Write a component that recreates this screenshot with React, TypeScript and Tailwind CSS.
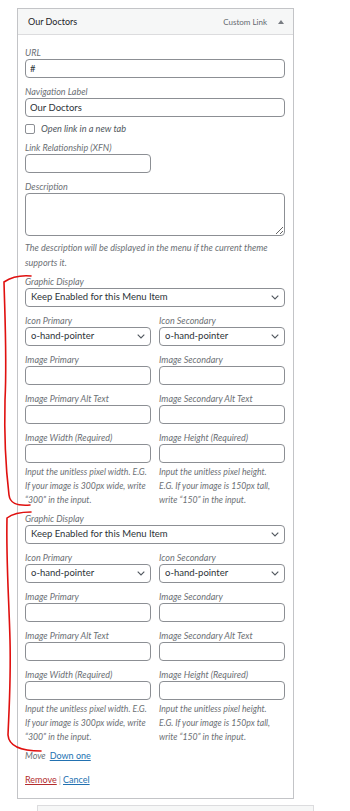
import type { ReactNode } from "react";

const font = { fontFamily: 'Lato, "Open Sans", sans-serif' };

function Label({ children }: { children: ReactNode }) {
  return (
    <div className="h-[13px] whitespace-nowrap text-[9px] italic leading-[13px] text-[#6c7075]">
      {children}
    </div>
  );
}

function TextInput({ value = "", className = "w-full" }: { value?: string; className?: string }) {
  return (
    <input
      readOnly
      value={value}
      className={`block h-[19px] rounded-[4px] border border-[#8c8f94] bg-white px-[4px] text-[9.5px] text-[#2c3338] outline-none ${className}`}
    />
  );
}

function Select({ value }: { value: string }) {
  return (
    <div className="flex h-[19px] w-full items-center justify-between rounded-[4px] border border-[#8c8f94] bg-white pl-[5px] pr-[5px] text-[9.5px] text-[#2c3338]">
      <span className="whitespace-nowrap">{value}</span>
      <svg width="8" height="5" viewBox="0 0 8 5" fill="none">
        <path d="M0.7 0.7 L4 4 L7.3 0.7" stroke="#50575e" strokeWidth="1.1" />
      </svg>
    </div>
  );
}

function Pair({ left, right }: { left: [string, ReactNode]; right: [string, ReactNode] }) {
  return (
    <div className="mt-[7px] grid grid-cols-2 gap-x-[8px]">
      <div>
        <Label>{left[0]}</Label>
        {left[1]}
      </div>
      <div>
        <Label>{right[0]}</Label>
        {right[1]}
      </div>
    </div>
  );
}

function GraphicGroup() {
  return (
    <div className="mt-[5px]">
      <Label>Graphic Display</Label>
      <Select value="Keep Enabled for this Menu Item" />
      <Pair
        left={["Icon Primary", <Select value="o-hand-pointer" />]}
        right={["Icon Secondary", <Select value="o-hand-pointer" />]}
      />
      <Pair left={["Image Primary", <TextInput />]} right={["Image Secondary", <TextInput />]} />
      <Pair
        left={["Image Primary Alt Text", <TextInput />]}
        right={["Image Secondary Alt Text", <TextInput />]}
      />
      <Pair
        left={["Image Width (Required)", <TextInput />]}
        right={["Image Height (Required)", <TextInput />]}
      />
      <div className="mt-[2px] grid grid-cols-2 gap-x-[8px] text-[8.7px] italic leading-[14px] text-[#6c7075]">
        <p>Input the unitless pixel width. E.G. If your image is 300px wide, write “300” in the input.</p>
        <p className="pr-[8px]">
          Input the unitless pixel height. E.G. If your image is 150px tall, write “150” in the input.
        </p>
      </div>
    </div>
  );
}

export default function App() {
  return (
    <div className="relative h-[811px] w-[350px] overflow-hidden bg-white" style={font}>
      <div className="ml-[17px] mt-[8px] w-[277px] border border-[#c3c4c7] bg-white">
        <div className="flex h-[26px] items-center justify-between border-b border-[#dcdcde] bg-[#f6f7f7] pl-[10px] pr-[9px]">
          <span className="text-[9px] text-[#1d2327]">Our Doctors</span>
          <div className="flex items-center gap-[11px]">
            <span className="text-[8px] text-[#646970]">Custom Link</span>
            <svg width="6" height="4" viewBox="0 0 6 4">
              <path d="M0 4 L3 0 L6 4 Z" fill="#787c82" />
            </svg>
          </div>
        </div>

        <div className="pb-[11px] pl-[7px] pr-[8px] pt-[11px]">
          <Label>URL</Label>
          <TextInput value="#" />

          <div className="mt-[7px]">
            <Label>Navigation Label</Label>
            <TextInput value="Our Doctors" />
          </div>

          <div className="mt-[7px] flex h-[10px] items-center gap-[6px]">
            <span className="block h-[10px] w-[10px] rounded-[2px] border border-[#8c8f94] bg-white" />
            <span className="text-[9.2px] italic text-[#50575e]">Open link in a new tab</span>
          </div>

          <div className="mt-[7px]">
            <Label>Link Relationship (XFN)</Label>
            <TextInput className="w-[126px]" />
          </div>

          <div className="mt-[7px]">
            <Label>Description</Label>
            <textarea
              readOnly
              className="block h-[43px] w-full rounded-[4px] border border-[#8c8f94] bg-white outline-none"
            />
            <p className="mt-[4px] text-[9px] italic leading-[15px] text-[#6c7075]">
              The description will be displayed in the menu if the current theme supports it.
            </p>
          </div>

          <GraphicGroup />
          <GraphicGroup />

          <div className="mt-[5px] flex items-center gap-[4px] text-[9px] leading-[14px]">
            <span className="italic text-[#6c7075]">Move</span>
            <a className="text-[#2271b1] underline">Down one</a>
          </div>

          <div className="mt-[10px] text-[9px] leading-[14px]">
            <a className="text-[#b32d2e] underline">Remove</a>
            <span className="mx-[2px] text-[#a7aaad]">|</span>
            <a className="text-[#2271b1] underline">Cancel</a>
          </div>
        </div>
      </div>

      <div className="ml-[37px] mt-[6px] h-[20px] w-[277px] border border-[#dcdcde] bg-[#f6f7f7]" />

      <svg className="pointer-events-none absolute left-0 top-0" width="350" height="811" fill="none">
        <path
          d="M31 276 C20 275 10 278 4 282 C5 320 7 360 5 400 C4 440 6 470 9 495 C10 503 16 506 30 505"
          stroke="#e0100f"
          strokeWidth="1.6"
          strokeLinecap="round"
        />
        <path
          d="M31 512 C20 512 12 514 7 518 C6 560 9 600 10 640 C11 680 9 710 8 735 C9 748 25 751 41 751"
          stroke="#e0100f"
          strokeWidth="1.6"
          strokeLinecap="round"
        />
      </svg>
    </div>
  );
}
